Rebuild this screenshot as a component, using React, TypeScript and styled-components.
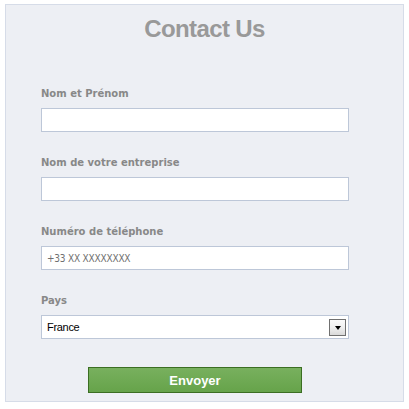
import React from "react";
import styled, { createGlobalStyle } from "styled-components";

const Global = createGlobalStyle`
  html, body { margin: 0; padding: 0; background: #ffffff; }
  body { font-family: "Liberation Sans", Arial, sans-serif; }
  * { box-sizing: border-box; }
`;

const Panel = styled.form`
  margin: 4px 0 0 5px;
  width: 399px;
  height: 398px;
  background: #edeff4;
  border: 1px solid #d6dce8;
  padding: 12px 0 8px 35px;
  display: flex;
  flex-direction: column;
`;

const Title = styled.h1`
  margin: 0 0 46px -35px;
  font-family: "Liberation Sans", Arial, sans-serif;
  font-size: 24px;
  line-height: 24px;
  font-weight: bold;
  letter-spacing: -0.6px;
  color: #999999;
  text-align: center;
`;

const Fields = styled.div`
  display: flex;
  flex-direction: column;
  gap: 24px;
`;

const Field = styled.div`
  display: flex;
  flex-direction: column;
  gap: 8px;
`;

const Label = styled.label`
  font-family: "DejaVu Sans", Verdana, sans-serif;
  font-size: 10px;
  line-height: 13px;
  font-weight: bold;
  color: #888888;
`;

const TextInput = styled.input`
  width: 308px;
  height: 24px;
  margin: 0;
  border: 1px solid #bdc7d8;
  background: #ffffff;
  padding: 0 5px;
  font-family: "Liberation Sans", Arial, sans-serif;
  font-size: 11px;
  color: #000;
  outline: none;
  &::placeholder {
    font-family: "DejaVu Sans Condensed", "DejaVu Sans", sans-serif;
    font-size: 10px;
    color: #6f6f6f;
    letter-spacing: -0.2px;
    opacity: 1;
  }
`;

const Select = styled.div`
  width: 308px;
  height: 24px;
  border: 1px solid #bdc7d8;
  background: #ffffff;
  display: flex;
  align-items: center;
  justify-content: space-between;
  padding: 0 2px 0 5px;
`;

const SelectValue = styled.span`
  font-family: "Liberation Sans", Arial, sans-serif;
  font-size: 11px;
  letter-spacing: -0.3px;
  color: #000;
`;

const ArrowButton = styled.span`
  width: 17px;
  height: 17px;
  border: 1px solid #707070;
  background: linear-gradient(#fbfbfb, #f0f0f0 50%, #d9d9d9);
  display: flex;
  align-items: center;
  justify-content: center;
  padding-top: 2px;
`;

const Triangle = styled.span`
  width: 0;
  height: 0;
  border-left: 3.5px solid transparent;
  border-right: 3.5px solid transparent;
  border-top: 4px solid #000;
`;

const Submit = styled.button`
  margin: 28px 0 0 47px;
  width: 214px;
  height: 26px;
  border: 1px solid #3b6e22;
  background: linear-gradient(#78b05e, #66a34a);
  color: #ffffff;
  font-family: "Liberation Sans", Arial, sans-serif;
  font-size: 13px;
  font-weight: bold;
  padding: 0;
  cursor: pointer;
`;

const fields = [
  { label: "Nom et Prénom", placeholder: "" },
  { label: "Nom de votre entreprise", placeholder: "" },
  { label: "Numéro de téléphone", placeholder: "+33 XX XXXXXXXX" },
];

export default function App() {
  return (
    <>
      <Global />
      <Panel onSubmit={(e) => e.preventDefault()}>
        <Title>Contact Us</Title>
        <Fields>
          {fields.map((f) => (
            <Field key={f.label}>
              <Label>{f.label}</Label>
              <TextInput type="text" placeholder={f.placeholder} />
            </Field>
          ))}
          <Field>
            <Label>Pays</Label>
            <Select>
              <SelectValue>France</SelectValue>
              <ArrowButton>
                <Triangle />
              </ArrowButton>
            </Select>
          </Field>
        </Fields>
        <Submit type="submit">Envoyer</Submit>
      </Panel>
    </>
  );
}
